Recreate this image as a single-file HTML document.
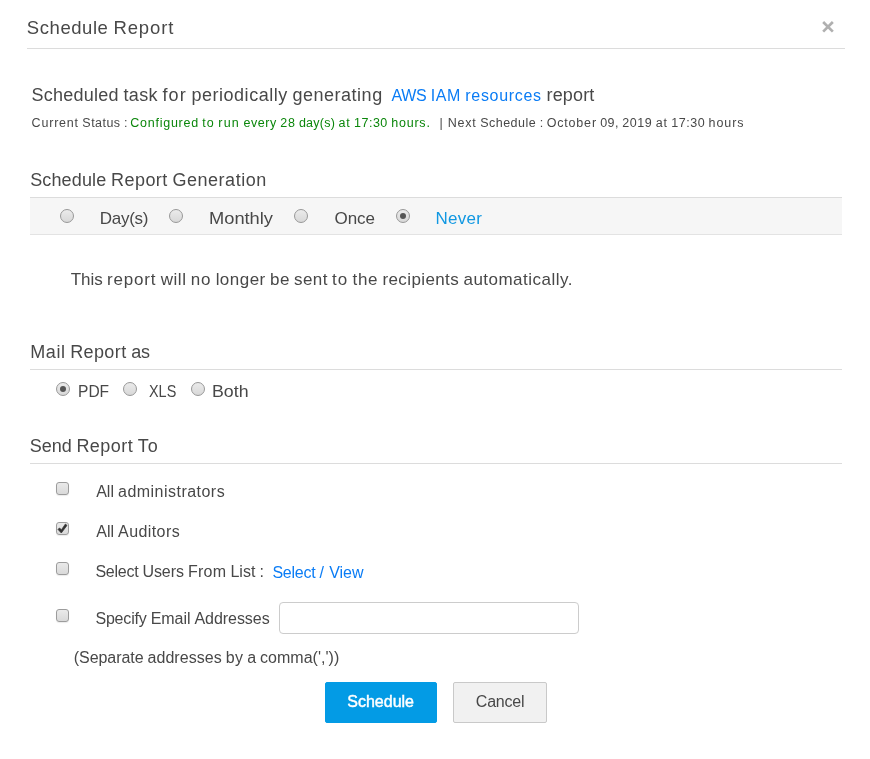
<!DOCTYPE html>
<html lang="en">
<head>
<meta charset="utf-8">
<title>Schedule Report</title>
<style>
html,body{margin:0;padding:0;background:#fff;}
body{width:870px;height:759px;position:relative;overflow:hidden;font-family:"Liberation Sans", sans-serif;color:#484848;}
.dialog{position:absolute;left:0;top:0;width:870px;height:759px;background:#fff;will-change:transform;}
.t{position:absolute;display:block;white-space:pre;line-height:0;margin:0;padding:0;font-weight:400;font-style:normal;text-decoration:none;}
.hr{position:absolute;height:1px;background:#dcdcdc;margin:0;border:0;}
.bar{position:absolute;left:30px;top:197px;width:812px;height:36px;background:#f6f6f6;border-top:1px solid #dcdcdc;border-bottom:1px solid #e3e3e3;}
.radio{position:absolute;width:12px;height:12px;border-radius:50%;border:1px solid #989898;background:linear-gradient(#ebebeb,#d8d8d8);}
.radio.on::after{content:"";position:absolute;left:3px;top:3px;width:6px;height:6px;border-radius:50%;background:#555;}
.chk{position:absolute;left:56px;width:11px;height:11px;border-radius:3px;border:1px solid #9c9c9c;background:linear-gradient(#eaeaea,#d9d9d9);box-shadow:0 1px 1px rgba(0,0,0,.08);}
.chk svg{position:absolute;left:-1px;top:-1px;}
.inp{position:absolute;left:279px;top:602px;width:300px;height:32px;box-sizing:border-box;margin:0;padding:0 8px;border:1px solid #ccc;border-radius:4px;background:#fff;outline:none;font:inherit;font-size:14px;-webkit-appearance:none;appearance:none;}
.btn{position:absolute;top:682px;height:41px;box-sizing:border-box;margin:0;padding:0;border-radius:2px;font:inherit;cursor:pointer;-webkit-appearance:none;appearance:none;outline:none;}
.btn.primary{left:325px;width:112px;background:#039be5;border:1px solid #039be5;}
.btn.cancel{left:453px;width:94px;background:#f1f1f1;border:1px solid #c9c9c9;}
.close{position:absolute;left:821px;top:20px;width:14px;height:14px;margin:0;padding:0;border:0;background:none;cursor:pointer;-webkit-appearance:none;appearance:none;}
.close svg{position:absolute;left:0;top:0;}
</style>
</head>
<body>
<div class="dialog" role="dialog" aria-label="Schedule Report">
<header>
<h1 id="t_title" class="t" style="left:26.83px;top:28px;font-size:18.5px;color:#484848;letter-spacing:0.000px;"><span style="letter-spacing:0.559px">Schedule</span><span style="letter-spacing:-0.140px"> </span><span style="letter-spacing:0.875px">Report</span></h1>
<button class="close" type="button" aria-label="Close"><svg width="14" height="14" viewBox="0 0 14 14"><path d="M2.15 2.05 L11.85 11.65 M11.85 2.05 L2.15 11.65" stroke="#b0b0b0" stroke-width="2.7" fill="none"/></svg></button>
<div class="hr" style="left:27px;top:48px;width:818px;"></div>
</header>
<section class="summary">
<span id="t_sched" class="t" style="left:31.40px;top:95px;font-size:18px;color:#484848;letter-spacing:0.000px;"><span style="letter-spacing:0.253px">Scheduled</span><span style="letter-spacing:-0.340px"> </span><span style="letter-spacing:0.346px">task</span><span style="letter-spacing:-0.340px"> </span><span style="letter-spacing:1.101px">for</span><span style="letter-spacing:-0.340px"> </span><span style="letter-spacing:0.516px">periodically</span><span style="letter-spacing:-0.340px"> </span><span style="letter-spacing:0.520px">generating</span></span>
<a id="t_aws" class="t" style="left:391.40px;top:96px;font-size:16px;color:#0a7cf5;letter-spacing:0.000px;"><span style="letter-spacing:-0.261px">AWS</span><span style="letter-spacing:-0.129px"> </span><span style="letter-spacing:0.583px">IAM</span><span style="letter-spacing:-0.129px"> </span><span style="letter-spacing:0.677px">resources</span></a>
<span id="t_report" class="t" style="left:546.48px;top:95px;font-size:18px;color:#484848;letter-spacing:0.165px;">report</span>
<span id="t_cur" class="t" style="left:31.60px;top:123px;font-size:12.5px;color:#484848;letter-spacing:0.000px;"><span style="letter-spacing:0.803px">Current</span><span style="letter-spacing:-0.060px"> </span><span style="letter-spacing:0.469px">Status</span><span style="letter-spacing:-0.060px"> </span><span style="letter-spacing:0.024px">:</span></span>
<span id="t_conf" class="t" style="left:130.33px;top:123px;font-size:12.5px;color:#0a860a;letter-spacing:0.000px;"><span style="letter-spacing:0.736px">Configured</span><span style="letter-spacing:-0.051px"> </span><span style="letter-spacing:1.106px">to</span><span style="letter-spacing:-0.051px"> </span><span style="letter-spacing:1.180px">run</span><span style="letter-spacing:-0.051px"> </span><span style="letter-spacing:0.586px">every</span><span style="letter-spacing:-0.051px"> </span><span style="letter-spacing:0.604px">28</span><span style="letter-spacing:-0.051px"> </span><span style="letter-spacing:0.250px">day(s)</span><span style="letter-spacing:-0.051px"> </span><span style="letter-spacing:0.789px">at</span><span style="letter-spacing:-0.051px"> </span><span style="letter-spacing:0.493px">17:30</span><span style="letter-spacing:-0.051px"> </span><span style="letter-spacing:0.779px">hours.</span></span>
<span id="t_sepbar" class="t" style="left:439.40px;top:123px;font-size:12.5px;color:#484848;letter-spacing:0.000px;">|</span>
<span id="t_next" class="t" style="left:447.66px;top:123px;font-size:12.5px;color:#484848;letter-spacing:0.000px;"><span style="letter-spacing:0.829px">Next</span><span style="letter-spacing:-0.045px"> </span><span style="letter-spacing:0.502px">Schedule</span><span style="letter-spacing:-0.045px"> </span><span style="letter-spacing:0.039px">:</span><span style="letter-spacing:-0.045px"> </span><span style="letter-spacing:0.823px">October</span><span style="letter-spacing:-0.045px"> </span><span style="letter-spacing:0.332px">09,</span><span style="letter-spacing:-0.045px"> </span><span style="letter-spacing:0.617px">2019</span><span style="letter-spacing:-0.045px"> </span><span style="letter-spacing:0.800px">at</span><span style="letter-spacing:-0.045px"> </span><span style="letter-spacing:0.505px">17:30</span><span style="letter-spacing:-0.045px"> </span><span style="letter-spacing:0.938px">hours</span></span>
</section>
<section class="generation">
<h2 id="t_srg" class="t" style="left:30.18px;top:180px;font-size:18px;color:#484848;letter-spacing:0.000px;"><span style="letter-spacing:0.141px">Schedule</span><span style="letter-spacing:-0.348px"> </span><span style="letter-spacing:0.450px">Report</span><span style="letter-spacing:-0.348px"> </span><span style="letter-spacing:0.531px">Generation</span></h2>
<div class="bar" role="radiogroup"></div>
<span class="radio" role="radio" aria-checked="false" style="left:60px;top:209px;"></span>
<label id="t_days" class="t" style="left:99.76px;top:219px;font-size:17px;color:#484848;letter-spacing:-0.271px;">Day(s)</label>
<span class="radio" role="radio" aria-checked="false" style="left:169px;top:209px;"></span>
<label id="t_monthly" class="t" style="left:208.96px;top:219px;font-size:17px;color:#484848;letter-spacing:0.000px;transform:scaleX(1.0749);transform-origin:0 50%;">Monthly</label>
<span class="radio" role="radio" aria-checked="false" style="left:294px;top:209px;"></span>
<label id="t_once" class="t" style="left:334.42px;top:219px;font-size:17px;color:#484848;letter-spacing:0.000px;">Once</label>
<span class="radio on" role="radio" aria-checked="true" style="left:396px;top:209px;"></span>
<label id="t_never" class="t" style="left:435.60px;top:219px;font-size:17px;color:#1198e2;letter-spacing:0.241px;">Never</label>
<p id="t_this" class="t" style="left:70.77px;top:280px;font-size:17px;color:#484848;letter-spacing:0.000px;"><span style="letter-spacing:-0.079px">This</span><span style="letter-spacing:-0.379px"> </span><span style="letter-spacing:0.833px">report</span><span style="letter-spacing:-0.379px"> </span><span style="letter-spacing:0.539px">will</span><span style="letter-spacing:-0.379px"> </span><span style="letter-spacing:0.749px">no</span><span style="letter-spacing:-0.379px"> </span><span style="letter-spacing:0.472px">longer</span><span style="letter-spacing:-0.379px"> </span><span style="letter-spacing:0.381px">be</span><span style="letter-spacing:-0.379px"> </span><span style="letter-spacing:0.370px">sent</span><span style="letter-spacing:-0.379px"> </span><span style="letter-spacing:0.930px">to</span><span style="letter-spacing:-0.379px"> </span><span style="letter-spacing:0.660px">the</span><span style="letter-spacing:-0.379px"> </span><span style="letter-spacing:0.385px">recipients</span><span style="letter-spacing:-0.379px"> </span><span style="letter-spacing:0.483px">automatically.</span></p>
</section>
<section class="format">
<h2 id="t_mail" class="t" style="left:30.35px;top:352px;font-size:18px;color:#484848;letter-spacing:0.000px;"><span style="letter-spacing:0.531px">Mail</span><span style="letter-spacing:-0.370px"> </span><span style="letter-spacing:0.405px">Report</span><span style="letter-spacing:-0.370px"> </span><span style="letter-spacing:-0.269px">as</span></h2>
<div class="hr" style="left:30px;top:369px;width:812px;"></div>
<span class="radio on" role="radio" aria-checked="true" style="left:56px;top:382px;"></span>
<label id="t_pdf" class="t" style="left:77.76px;top:392px;font-size:17px;color:#484848;letter-spacing:0.000px;transform:scaleX(0.9150);transform-origin:0 50%;">PDF</label>
<span class="radio" role="radio" aria-checked="false" style="left:123px;top:382px;"></span>
<label id="t_xls" class="t" style="left:149.07px;top:392px;font-size:17px;color:#484848;letter-spacing:0.000px;transform:scaleX(0.8477);transform-origin:0 50%;">XLS</label>
<span class="radio" role="radio" aria-checked="false" style="left:191px;top:382px;"></span>
<label id="t_both" class="t" style="left:212.20px;top:392px;font-size:17px;color:#484848;letter-spacing:0.000px;transform:scaleX(1.0451);transform-origin:0 50%;">Both</label>
</section>
<section class="recipients">
<h2 id="t_send" class="t" style="left:29.86px;top:446px;font-size:18px;color:#484848;letter-spacing:0.000px;"><span style="letter-spacing:-0.031px">Send</span><span style="letter-spacing:-0.354px"> </span><span style="letter-spacing:0.437px">Report</span><span style="letter-spacing:-0.354px"> </span><span style="letter-spacing:0.875px">To</span></h2>
<div class="hr" style="left:30px;top:463px;width:812px;"></div>
<span class="chk" role="checkbox" aria-checked="false" style="top:482px;"></span>
<label id="t_alladm" class="t" style="left:96.20px;top:492px;font-size:16px;color:#484848;letter-spacing:0.000px;"><span style="letter-spacing:0.003px">All</span><span style="letter-spacing:-0.395px"> </span><span style="letter-spacing:0.472px">administrators</span></label>
<span class="chk" role="checkbox" aria-checked="true" style="top:522px;"><svg width="13" height="13" viewBox="0 0 13 13"><polygon points="2.0,7.4 3.4,6.0 5.5,7.7 9.4,2.0 11.0,3.4 5.3,11.0" fill="#333" stroke="#333" stroke-width="0.7"/></svg></span>
<label id="t_allaud" class="t" style="left:96.20px;top:532px;font-size:16px;color:#484848;letter-spacing:0.000px;"><span style="letter-spacing:0.021px">All</span><span style="letter-spacing:-0.383px"> </span><span style="letter-spacing:0.408px">Auditors</span></label>
<span class="chk" role="checkbox" aria-checked="false" style="top:562px;"></span>
<label id="t_selusers" class="t" style="left:95.38px;top:572px;font-size:16px;color:#484848;letter-spacing:0.000px;"><span style="letter-spacing:-0.245px">Select</span><span style="letter-spacing:-0.396px"> </span><span style="letter-spacing:-0.074px">Users</span><span style="letter-spacing:-0.396px"> </span><span style="letter-spacing:0.268px">From</span><span style="letter-spacing:-0.396px"> </span><span style="letter-spacing:0.029px">List</span><span style="letter-spacing:-0.396px"> </span><span style="letter-spacing:-0.297px">:</span></label>
<a id="t_selview" class="t" style="left:272.38px;top:573px;font-size:16px;color:#0a7cf5;letter-spacing:0.000px;"><span style="letter-spacing:-0.237px">Select</span><span style="letter-spacing:-0.391px"> </span><span style="letter-spacing:1.288px">/</span><span style="letter-spacing:-0.391px"> </span><span style="letter-spacing:-0.049px">View</span></a>
<span class="chk" role="checkbox" aria-checked="false" style="top:609px;"></span>
<label id="t_specify" class="t" style="left:95.38px;top:619px;font-size:16px;color:#484848;letter-spacing:0.000px;"><span style="letter-spacing:-0.164px">Specify</span><span style="letter-spacing:-0.406px"> </span><span style="letter-spacing:-0.063px">Email</span><span style="letter-spacing:-0.406px"> </span><span style="letter-spacing:-0.056px">Addresses</span></label>
<input class="inp" type="text" aria-label="Email addresses">
<p id="t_sep" class="t" style="left:73.83px;top:658px;font-size:16px;color:#484848;letter-spacing:0.000px;"><span style="letter-spacing:-0.071px">(Separate</span><span style="letter-spacing:-0.392px"> </span><span style="letter-spacing:0.037px">addresses</span><span style="letter-spacing:-0.392px"> </span><span style="letter-spacing:0.277px">by</span><span style="letter-spacing:-0.392px"> </span><span style="letter-spacing:-0.211px">a</span><span style="letter-spacing:-0.392px"> </span><span style="letter-spacing:0.027px">comma(','))</span></p>
</section>
<footer>
<button class="btn primary" type="button"><span id="t_schedule" class="t" style="left:21.30px;top:19px;font-size:16px;color:#ffffff;letter-spacing:0.000px;-webkit-text-stroke:0.45px #fff;">Schedule</span></button>
<button class="btn cancel" type="button"><span id="t_cancel" class="t" style="left:21.83px;top:19px;font-size:16px;color:#484848;letter-spacing:-0.212px;">Cancel</span></button>
</footer>
</div>
</body>
</html>
